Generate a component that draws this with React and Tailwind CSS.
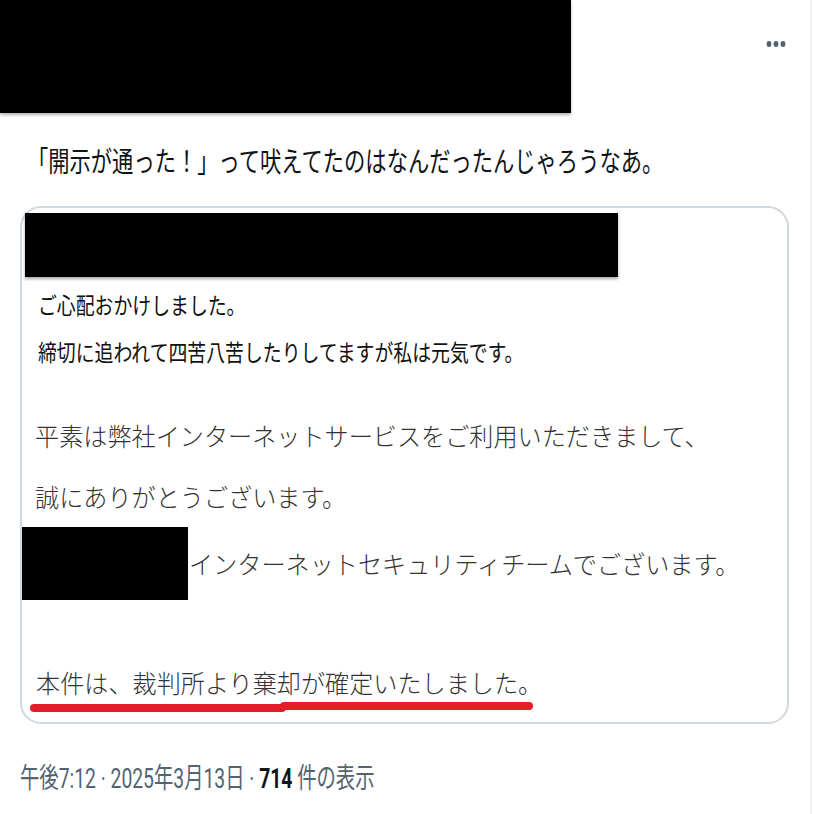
import React from "react";

const jp = { fontFamily: '"Noto Sans CJK JP", "Noto Sans", sans-serif' };
const foot = { fontFamily: 'Roboto, "Noto Sans CJK JP", sans-serif' };

export default function App() {
  return (
    <div lang="ja" className="w-[814px] h-[814px] bg-white overflow-hidden flex" style={jp}>
      <div className="w-[812px] h-full border-r-2 border-[#eff3f4] flex flex-col">
        {/* header */}
        <div className="flex justify-between items-start">
          <div className="w-[571px] h-[113px] bg-black shadow-[0_2px_3px_rgba(0,0,0,0.3)]" />
          <svg className="mt-[40px] mr-[24px]" width="20" height="8" viewBox="0 0 20 8">
            <ellipse cx="3" cy="4" rx="2.4" ry="3" fill="#536471" />
            <ellipse cx="10" cy="4" rx="2.4" ry="3" fill="#536471" />
            <ellipse cx="17" cy="4" rx="2.4" ry="3" fill="#536471" />
          </svg>
        </div>

        {/* tweet text */}
        <div className="mt-[33px] pl-[27px] text-[28px] leading-[28px] text-[#0f1419] whitespace-nowrap">
          <span className="inline-block origin-left scale-x-[0.76]">
            「開示が通った！」って吠えてたのはなんだったんじゃろうなあ。
          </span>
        </div>

        {/* card */}
        <div className="mt-[32px] ml-[20px] w-[769px] h-[518px] border-2 border-[#cfd9de] rounded-[21px] flex flex-col">
          <div className="mt-[5px] ml-[3px] w-[593px] h-[64px] bg-black shadow-[0_2px_3px_rgba(0,0,0,0.35)]" />

          <div className="mt-[16px] pl-[16px] text-[23px] leading-[22px] text-[#111] whitespace-nowrap">
            <span className="inline-block origin-left scale-x-[0.82]">ご心配おかけしました。</span>
          </div>
          <div className="mt-[25px] pl-[16px] text-[23px] leading-[22px] text-[#111] whitespace-nowrap">
            <span className="inline-block origin-left scale-x-[0.82]">
              締切に追われて四苦八苦したりしてますが私は元気です。
            </span>
          </div>

          <div className="mt-[62px] pl-[13px] text-[25px] leading-[23px] text-[#333] font-light whitespace-nowrap">
            <span className="inline-block origin-left scale-x-[0.965]">
              平素は弊社インターネットサービスをご利用いただきまして、
            </span>
          </div>
          <div className="mt-[38px] pl-[13px] text-[25px] leading-[23px] text-[#333] font-light whitespace-nowrap">
            <span className="inline-block origin-left scale-x-[0.965]">誠にありがとうございます。</span>
          </div>

          <div className="mt-[19px] flex items-center">
            <div className="w-[166px] h-[73px] bg-black" />
            <div className="pl-[1px] text-[25px] leading-[23px] text-[#333] font-light whitespace-nowrap">
              <span className="inline-block origin-left scale-x-[0.965]">
                インターネットセキュリティチームでございます。
              </span>
            </div>
          </div>

          <div className="mt-[71px] pl-[14px] text-[25px] leading-[23px] text-[#333] font-light whitespace-nowrap">
            <span className="inline-block origin-left scale-x-[0.965]">
              本件は、裁判所より棄却が確定いたしました。
            </span>
          </div>
          <div className="mt-[8px] ml-[8px] flex items-start">
            <div className="mt-[2px] w-[256px] h-[8px] bg-[#e31e26] rounded-full" />
            <div className="-ml-[6px] w-[253px] h-[8px] bg-[#e31e26] rounded-full" />
          </div>
        </div>

        {/* footer */}
        <div className="mt-[41px] pl-[20px] text-[28px] leading-[28px] text-[#536471] whitespace-nowrap" style={foot}>
          <span className="inline-block origin-left scale-x-[0.69]">
            午後7:12 · 2025年3月13日 · <span className="font-bold text-[#0f1419]">714</span> 件の表示
          </span>
        </div>
      </div>
    </div>
  );
}
